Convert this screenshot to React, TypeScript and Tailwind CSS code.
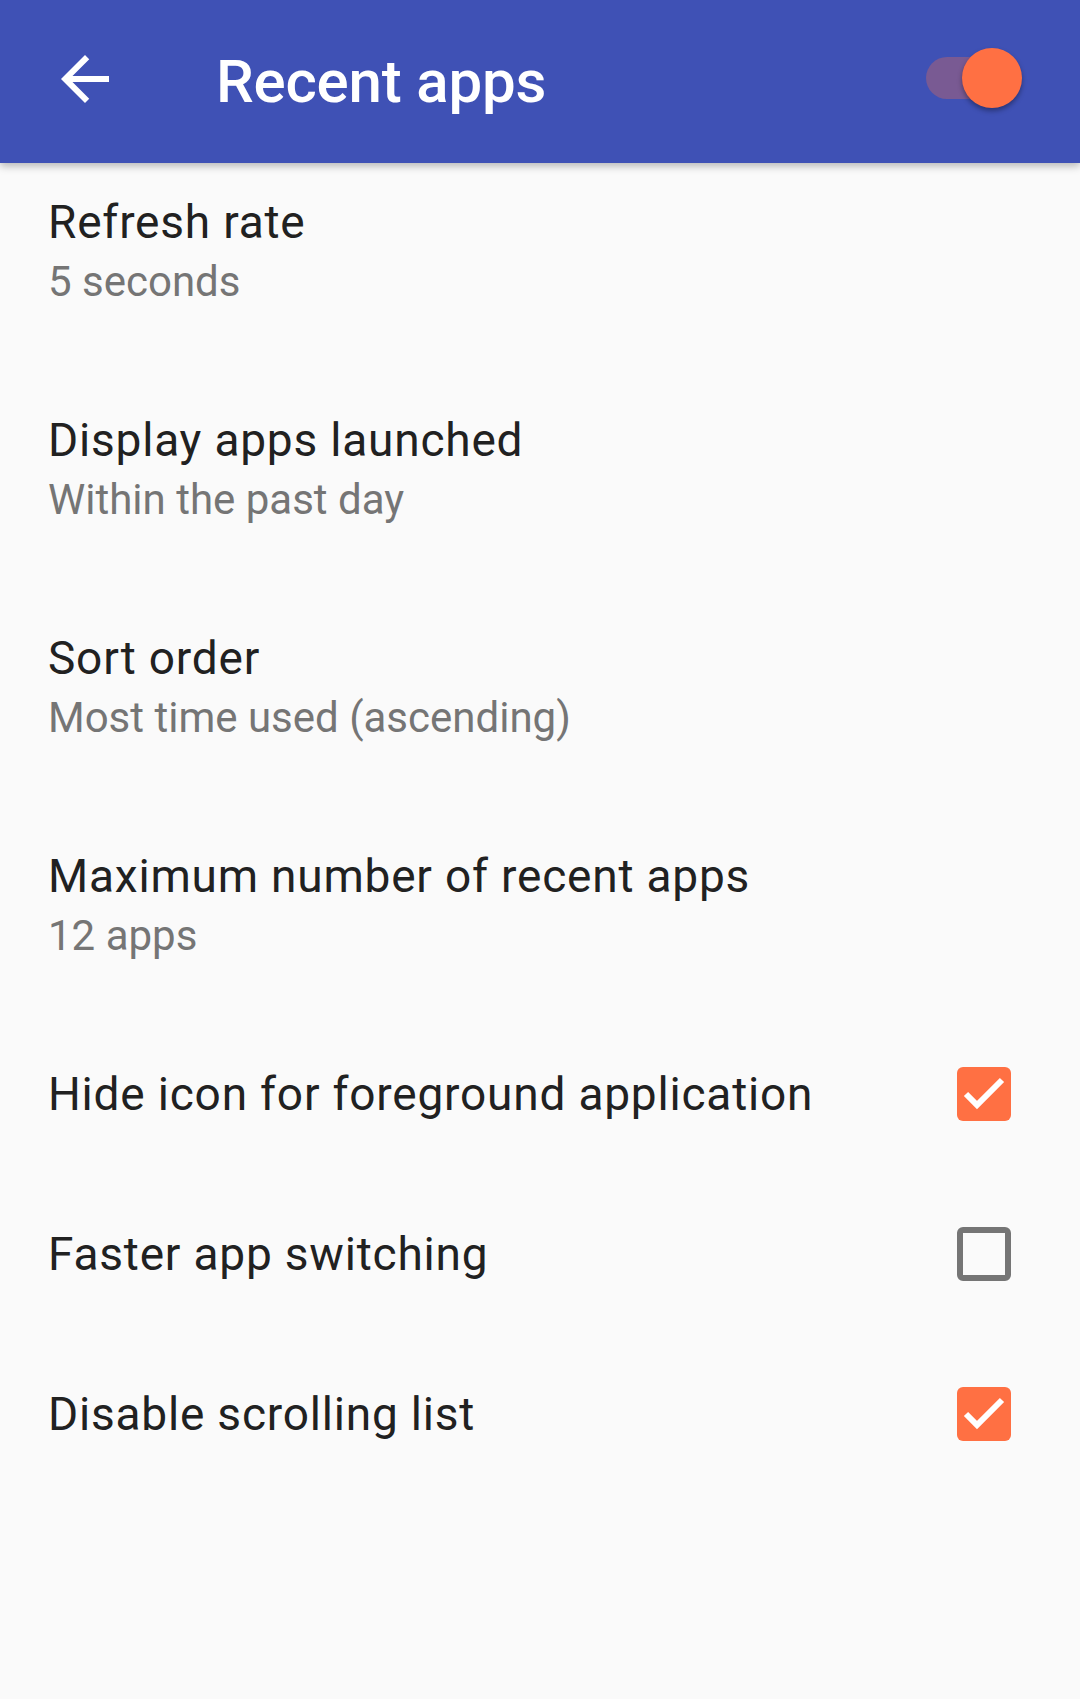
import React, { useState } from 'react';

type Pref = {
  title: string;
  summary?: string;
  checked?: boolean;
};

const prefs: Pref[] = [
  { title: 'Refresh rate', summary: '5 seconds' },
  { title: 'Display apps launched', summary: 'Within the past day' },
  { title: 'Sort order', summary: 'Most time used (ascending)' },
  { title: 'Maximum number of recent apps', summary: '12 apps' },
  { title: 'Hide icon for foreground application', checked: true },
  { title: 'Faster app switching', checked: false },
  { title: 'Disable scrolling list', checked: true },
];

const Checkbox: React.FC<{ checked: boolean; onToggle: () => void }> = ({ checked, onToggle }) => (
  <button
    onClick={onToggle}
    className={`w-[54px] h-[54px] shrink-0 rounded-[6px] flex items-center justify-center ${
      checked ? 'bg-[#ff7043]' : 'border-[6px] border-[#757575]'
    }`}
  >
    {checked && (
      <svg width="54" height="54" viewBox="0 0 54 54">
        <polyline points="9,27 20,38 45,13" fill="none" stroke="#fff" strokeWidth="6" />
      </svg>
    )}
  </button>
);

const App: React.FC = () => {
  const [checks, setChecks] = useState<Record<number, boolean>>({ 4: true, 5: false, 6: true });
  const [enabled, setEnabled] = useState(true);

  return (
    <div className="min-h-[1699px] bg-[#fafafa] font-[Roboto,sans-serif]">
      {/* App bar */}
      <div className="relative z-10 h-[163px] bg-[#3f51b5] flex items-center pl-[49px] pr-[58px] shadow-[0_3px_8px_rgba(0,0,0,0.28)]">
        <svg width="72" height="72" viewBox="0 0 24 24" className="mb-[5px] shrink-0">
          <path d="M20 11H7.83l5.59-5.59L12 4l-8 8 8 8 1.41-1.41L7.83 13H20v-2z" fill="#fff" />
        </svg>
        <h1 className="ml-[95px] text-white text-[60px] leading-[70px] font-medium tracking-[-0.2px] flex-1">Recent apps</h1>
        <button onClick={() => setEnabled(!enabled)} className="relative w-[96px] h-[60px] mb-[7px]">
          <span className="absolute left-0 top-[9px] w-[87px] h-[42px] rounded-full bg-[#795a93]" />
          <span className="absolute right-0 top-0 w-[60px] h-[60px] rounded-full bg-[#ff7043] shadow-[0_3px_5px_rgba(0,0,0,0.35)]" />
        </button>
      </div>

      {/* Preferences */}
      <div className="flex flex-col">
        {prefs.map((p, i) =>
          p.summary ? (
            <div key={i} className={`pl-[48px] pr-[69px] pb-[49px] ${i === 0 ? 'pt-[29px]' : 'pt-[49px]'}`}>
              <div className="text-[46px] leading-[60px] tracking-[0.8px] text-[#212121]">{p.title}</div>
              <div className="text-[42px] leading-[60px] text-[#757575]">{p.summary}</div>
            </div>
          ) : (
            <div key={i} className="flex items-center justify-between pl-[48px] pr-[69px] pt-[49px] pb-[51px]">
              <div className="text-[46px] leading-[60px] tracking-[0.8px] text-[#212121]">{p.title}</div>
              <Checkbox
                checked={!!checks[i]}
                onToggle={() => setChecks(prev => ({ ...prev, [i]: !prev[i] }))}
              />
            </div>
          )
        )}
      </div>
    </div>
  );
};

export default App;
